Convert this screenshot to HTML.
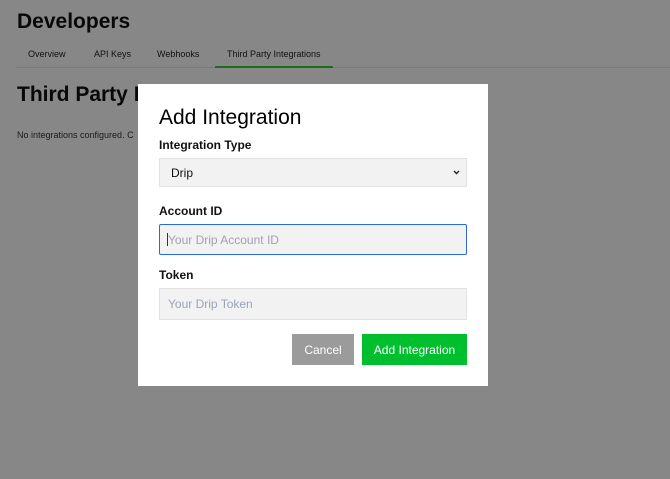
<!DOCTYPE html>
<html><head><style>
*{box-sizing:border-box;margin:0;padding:0}
body{width:670px;height:479px;background:#878787;font-family:"Liberation Sans",sans-serif;position:relative;overflow:hidden;color:#000}
.a{position:absolute;white-space:nowrap}
.lbl{font-size:12px;font-weight:bold;color:#111}
.inp{position:absolute;left:21px;width:308px;background:#f2f2f2;border:1px solid #e2e2e2;font-size:12px;color:#9aa3b5;padding-left:8px;display:flex;align-items:center}
</style></head><body>
<div class="a" style="left:17px;top:10px;font-size:21px;font-weight:bold;color:#080808">Developers</div>
<div class="a" style="left:28px;top:49px;font-size:9px;color:#111">Overview</div>
<div class="a" style="left:94px;top:49px;font-size:9px;color:#111">API Keys</div>
<div class="a" style="left:157px;top:49px;font-size:9px;color:#111">Webhooks</div>
<div class="a" style="left:227px;top:49px;font-size:9px;color:#111">Third Party Integrations</div>
<div class="a" style="left:16px;top:67px;width:654px;height:1px;background:#7a7a7a"></div>
<div class="a" style="left:215px;top:66px;width:118px;height:2px;background:#1c6e1c"></div>
<div class="a" style="left:17px;top:83px;font-size:21px;font-weight:bold;color:#080808">Third Party I</div>
<div class="a" style="left:17px;top:130px;font-size:9px;color:#1a1a1a">No integrations configured. C</div>
<div class="a" style="left:138px;top:84px;width:350px;height:302px;background:#fff">
 <div class="a" style="left:21px;top:22px;font-size:21px;color:#000">Add Integration</div>
 <div class="a lbl" style="left:21px;top:54px">Integration Type</div>
 <div class="inp" style="top:74px;height:29px;color:#111;padding-left:11px">Drip<svg style="position:absolute;right:6px;top:11px" width="7" height="5" viewBox="0 0 7 5"><path d="M1 1l2.5 2.5L6 1" stroke="#222" stroke-width="1.4" fill="none"/></svg></div>
 <div class="a lbl" style="left:21px;top:120px">Account ID</div>
 <div class="inp" style="top:140px;height:31px;border:1.5px solid #2a6ad8;border-radius:2px">Your Drip Account ID</div>
 <div class="a" style="left:29px;top:149px;width:1px;height:13px;background:#333"></div>
 <div class="a lbl" style="left:21px;top:184px">Token</div>
 <div class="inp" style="top:204px;height:32px">Your Drip Token</div>
 <div class="a" style="left:154px;top:250px;width:62px;height:31px;background:#9b9b9b;color:#fff;font-size:12px;display:flex;align-items:center;justify-content:center">Cancel</div>
 <div class="a" style="left:224px;top:250px;width:105px;height:31px;background:#00bf2f;color:#fff;font-size:12px;display:flex;align-items:center;justify-content:center">Add Integration</div>
</div>
</body></html>
